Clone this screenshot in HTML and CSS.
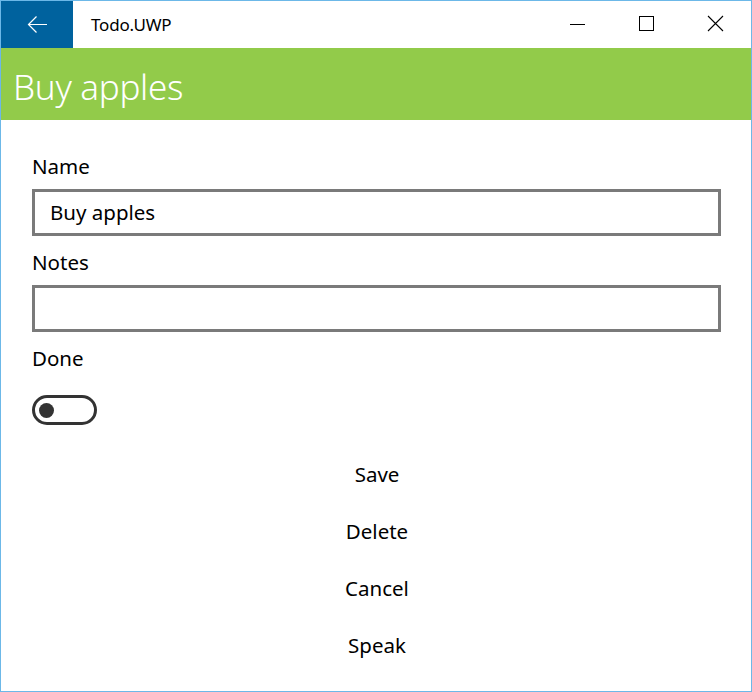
FILE: index.html
```html
<!DOCTYPE html>
<html>
<head>
<meta charset="utf-8">
<link rel="stylesheet" href="styles.css">
</head>
<body>
<div class="window">
  <div class="titlebar">
    <div class="back">
      <svg width="72" height="46" viewBox="0 0 72 46">
        <path d="M27.5 22.5 H46 M35.5 14.5 L27.5 22.5 L35.5 30.5" fill="none" stroke="#fff" stroke-width="1.2"/>
      </svg>
    </div>
    <div class="apptitle">Todo.UWP</div>
    <div class="caption">
      <div class="capbtn">
        <svg width="69" height="46" viewBox="0 0 69 46"><path d="M25 23.5 H40" stroke="#000" stroke-width="1"/></svg>
      </div>
      <div class="capbtn">
        <svg width="69" height="46" viewBox="0 0 69 46"><rect x="25.5" y="15.5" width="14" height="14" fill="none" stroke="#000" stroke-width="1"/></svg>
      </div>
      <div class="capbtn">
        <svg width="68" height="46" viewBox="0 0 68 46"><path d="M25 15 L40 30 M40 15 L25 30" stroke="#000" stroke-width="1.1"/></svg>
      </div>
    </div>
  </div>
  <div class="header">Buy apples</div>
  <div class="content">
    <div class="label first">Name</div>
    <div class="textbox">Buy apples</div>
    <div class="label">Notes</div>
    <div class="textbox"></div>
    <div class="label">Done</div>
    <div class="toggle"><div class="knob"></div></div>
    <div class="buttons">
      <div class="btn">Save</div>
      <div class="btn">Delete</div>
      <div class="btn">Cancel</div>
      <div class="btn">Speak</div>
    </div>
  </div>
</div>
</body>
</html>
```
FILE: styles.css
```css
html, body {
  margin: 0;
  padding: 0;
  background: #fff;
}
body {
  font-family: "Noto Sans", "Open Sans", sans-serif;
  color: #000;
}
.window {
  width: 750px;
  height: 690px;
  border: 1px solid #6cb8e8;
  overflow: hidden;
  display: flex;
  flex-direction: column;
}
.titlebar {
  height: 47px;
  display: flex;
  align-items: stretch;
  flex-shrink: 0;
}
.back {
  width: 72px;
  background: #00629e;
  display: flex;
  align-items: center;
}
.back svg { display: block; }
.apptitle {
  font-size: 17px;
  line-height: 47px;
  padding-left: 18px;
  flex: 1;
  letter-spacing: -0.2px;
}
.caption {
  display: flex;
}
.capbtn svg { display: block; }
.header {
  height: 72px;
  background: #92cb4a;
  color: #fff;
  font-size: 35px;
  font-weight: 300;
  line-height: 78px;
  padding-left: 12px;
  flex-shrink: 0;
  overflow: hidden;
  letter-spacing: -0.3px;
}
.content {
  padding: 0 30px 0 30px;
  display: flex;
  flex-direction: column;
}
.label {
  font-size: 20.5px;
  line-height: 30px;
  margin-top: 11px;
  margin-bottom: 8px;
  padding-left: 1px;
}
.label.first { margin-top: 31px; }
.textbox {
  height: 41px;
  margin-left: 1px;
  border: 3px solid #7a7a7a;
  font-size: 20.5px;
  line-height: 41px;
  padding-left: 15px;
}
.toggle {
  box-sizing: border-box;
  margin-top: 14px;
  margin-left: 1px;
  width: 65px;
  height: 30px;
  border: 3px solid #333;
  border-radius: 15px;
  display: flex;
  align-items: center;
  padding-left: 4px;
}
.knob {
  width: 15px;
  height: 15px;
  border-radius: 50%;
  background: #333;
}
.buttons {
  margin-top: 21px;
  display: flex;
  flex-direction: column;
  align-items: center;
  padding-left: 2px;
}
.btn {
  height: 57px;
  line-height: 57px;
  font-size: 20.5px;
}
```
